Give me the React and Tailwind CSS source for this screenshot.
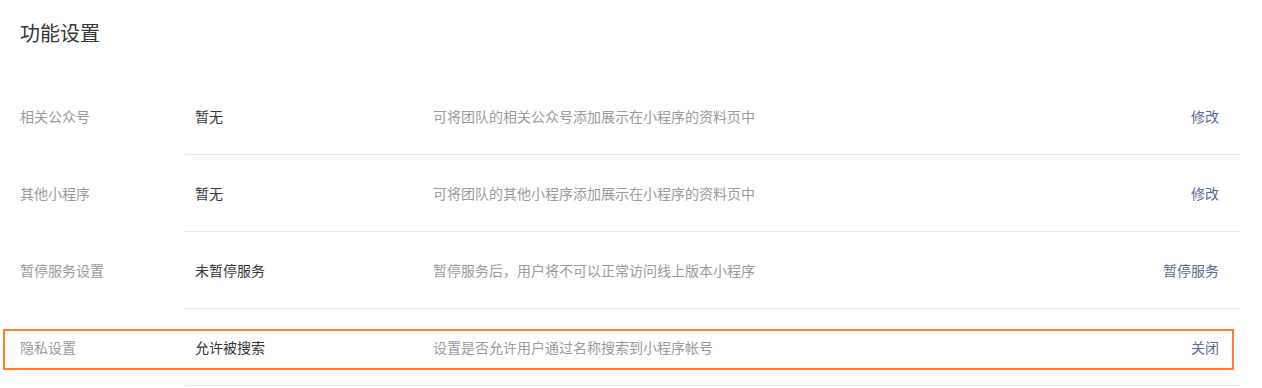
import React from 'react';

const rows = [
  { label: '相关公众号', value: '暂无', desc: '可将团队的相关公众号添加展示在小程序的资料页中', action: '修改' },
  { label: '其他小程序', value: '暂无', desc: '可将团队的其他小程序添加展示在小程序的资料页中', action: '修改' },
  { label: '暂停服务设置', value: '未暂停服务', desc: '暂停服务后，用户将不可以正常访问线上版本小程序', action: '暂停服务' },
  { label: '隐私设置', value: '允许被搜索', desc: '设置是否允许用户通过名称搜索到小程序帐号', action: '关闭', highlight: true },
];

const App = () => {
  return (
    <div className="w-[1262px] h-[388px] bg-white font-['Noto_Sans_CJK_SC',sans-serif] text-[14px] overflow-hidden">
      <div className="h-[78px] pl-5 pt-[19px]">
        <h2 className="text-[20px] leading-[28px] text-[#353535] font-normal">功能设置</h2>
      </div>
      <div className="w-[1240px]">
        {rows.map(row => (
          <div key={row.label} className="relative flex h-[77px]">
            {row.highlight && (
              <div className="absolute left-[3px] top-[20px] w-[1231px] h-[41px] border-2 border-[#fd7f2c] pointer-events-none" />
            )}
            <div className="w-[185px] shrink-0 pl-5 flex items-center text-[#9a9a9a]">{row.label}</div>
            <div className="flex-1 flex items-center border-b border-[#e7e7eb]">
              <div className="w-[248px] pl-[10px] text-[#353535]">{row.value}</div>
              <div className="flex-1 text-[#9a9a9a]">{row.desc}</div>
              <a href="#" className="pr-[21px] text-[#576b95]">{row.action}</a>
            </div>
          </div>
        ))}
      </div>
    </div>
  );
};

export default App;
